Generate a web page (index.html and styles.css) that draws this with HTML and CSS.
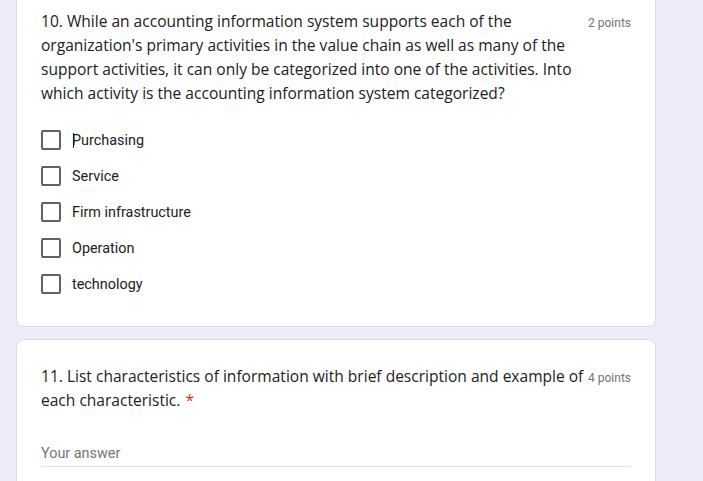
FILE: index.html
```html
<!DOCTYPE html>
<html lang="en">
<head>
<meta charset="utf-8">
<title>Form</title>
<link rel="stylesheet" href="styles.css">
</head>
<body>
<main class="form">
  <section class="card card-first">
    <div class="q-header">
      <div class="q-title">10. While an accounting information system supports each of the organization's primary activities in the value chain as well as many of the support activities, it can only be categorized into one of the activities. Into which activity is the accounting information system categorized?</div>
      <div class="q-points">2 points</div>
    </div>
    <ul class="options">
      <li class="option"><span class="box"></span><span class="label">Purchasing<span class="cursor"></span></span></li>
      <li class="option"><span class="box"></span><span class="label">Service</span></li>
      <li class="option"><span class="box"></span><span class="label">Firm infrastructure</span></li>
      <li class="option"><span class="box"></span><span class="label">Operation</span></li>
      <li class="option"><span class="box"></span><span class="label">technology</span></li>
    </ul>
  </section>
  <section class="card">
    <div class="q-header">
      <div class="q-title">11. List characteristics of information with brief description and example of each characteristic.<span class="req">*</span></div>
      <div class="q-points">4 points</div>
    </div>
    <div class="answer">Your answer</div>
  </section>
</main>
</body>
</html>
```

FILE: styles.css
```css
html, body {
  margin: 0;
  padding: 0;
}

body {
  background: #efebf8;
  font-family: Roboto, "Liberation Sans", sans-serif;
  color: #202124;
  height: 481px;
  overflow: hidden;
}

.form {
  width: 640px;
  margin: -16px 0 0 16px;
  display: flex;
  flex-direction: column;
  gap: 12px;
}

.card {
  background: #fff;
  border: 1px solid #dadce0;
  border-radius: 8px;
  padding: 24px 24px 24px 24px;
}

.q-header {
  display: flex;
  align-items: flex-start;
  gap: 4px;
}

.q-title {
  flex: 1;
  font-family: "Open Sans", sans-serif;
  font-size: 15.55px;
  line-height: 24px;
  color: #202124;
}

.req {
  color: #d93025;
  margin-left: 5px;
}

.q-points {
  font-family: Roboto, sans-serif;
  font-size: 12px;
  line-height: 24px;
  padding-top: 2px;
  color: #70757a;
  white-space: nowrap;
}

.options {
  list-style: none;
  margin: 17px 0 0 0;
  padding: 0;
}

.option {
  height: 36px;
  display: flex;
  align-items: center;
}

.box {
  width: 20px;
  height: 20px;
  box-sizing: border-box;
  border: 2px solid #5f6368;
  border-radius: 2px;
  flex: none;
}

.label {
  position: relative;
  margin-left: 11px;
  padding-top: 2px;
  font-size: 14.4px;
  line-height: 20px;
  color: #202124;
}

.cursor {
  position: absolute;
  left: 1px;
  top: 4px;
  width: 1px;
  height: 15px;
  background: #141432;
}

.answer {
  margin-top: 32px;
  font-size: 14.4px;
  line-height: 20px;
  color: #70757a;
  padding-bottom: 2px;
  border-bottom: 1px solid #e0e0e0;
}
```
